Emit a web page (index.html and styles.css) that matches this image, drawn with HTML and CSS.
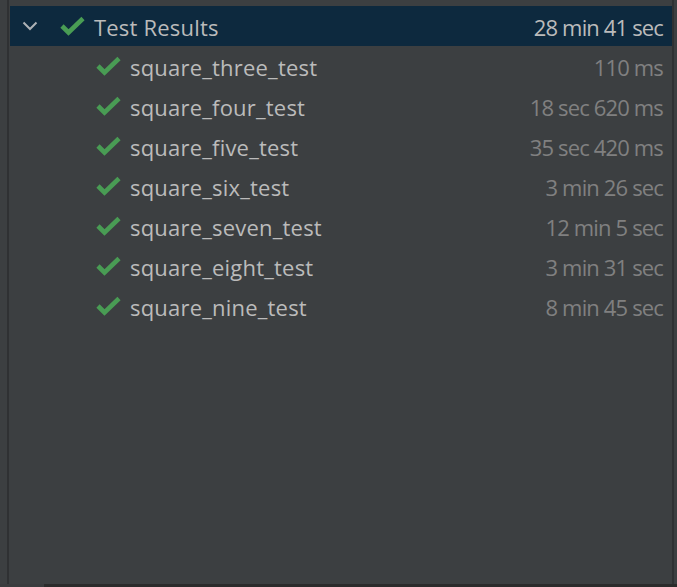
FILE: index.html
```html
<!DOCTYPE html>
<html>
<head>
<meta charset="utf-8">
<link rel="stylesheet" href="styles.css">
</head>
<body>
<div class="frame">
  <div class="gutter"></div>
  <div class="panel">
    <div class="row header">
      <svg class="chev" width="16" height="10" viewBox="0 0 16 10"><path d="M1.5 1.5 L8 8 L14.5 1.5" fill="none" stroke="#aeb2b6" stroke-width="2"/></svg>
      <svg class="check" width="25" height="20" viewBox="0 0 25 20"><path d="M2 10 L8.5 16.5 L23 2.5" fill="none" stroke="#499c54" stroke-width="4.6"/></svg>
      <span class="name">Test Results</span>
      <span class="time">28 min 41 sec</span>
    </div>
    <div class="row child"><svg class="check" width="25" height="20" viewBox="0 0 25 20"><path d="M2 10 L8.5 16.5 L23 2.5" fill="none" stroke="#499c54" stroke-width="4.6"/></svg><span class="name">square_three_test</span><span class="time">110 ms</span></div>
    <div class="row child"><svg class="check" width="25" height="20" viewBox="0 0 25 20"><path d="M2 10 L8.5 16.5 L23 2.5" fill="none" stroke="#499c54" stroke-width="4.6"/></svg><span class="name">square_four_test</span><span class="time">18 sec 620 ms</span></div>
    <div class="row child"><svg class="check" width="25" height="20" viewBox="0 0 25 20"><path d="M2 10 L8.5 16.5 L23 2.5" fill="none" stroke="#499c54" stroke-width="4.6"/></svg><span class="name">square_five_test</span><span class="time">35 sec 420 ms</span></div>
    <div class="row child"><svg class="check" width="25" height="20" viewBox="0 0 25 20"><path d="M2 10 L8.5 16.5 L23 2.5" fill="none" stroke="#499c54" stroke-width="4.6"/></svg><span class="name">square_six_test</span><span class="time">3 min 26 sec</span></div>
    <div class="row child"><svg class="check" width="25" height="20" viewBox="0 0 25 20"><path d="M2 10 L8.5 16.5 L23 2.5" fill="none" stroke="#499c54" stroke-width="4.6"/></svg><span class="name">square_seven_test</span><span class="time">12 min 5 sec</span></div>
    <div class="row child"><svg class="check" width="25" height="20" viewBox="0 0 25 20"><path d="M2 10 L8.5 16.5 L23 2.5" fill="none" stroke="#499c54" stroke-width="4.6"/></svg><span class="name">square_eight_test</span><span class="time">3 min 31 sec</span></div>
    <div class="row child"><svg class="check" width="25" height="20" viewBox="0 0 25 20"><path d="M2 10 L8.5 16.5 L23 2.5" fill="none" stroke="#499c54" stroke-width="4.6"/></svg><span class="name">square_nine_test</span><span class="time">8 min 45 sec</span></div>
  </div>
  <div class="rightedge"></div>
</div>
<div class="bottom"><div class="bottom-seg"></div></div>
</body>
</html>
```
FILE: styles.css
```css
html, body {
  margin: 0;
  padding: 0;
  background: #3c3f41;
  width: 677px;
  height: 587px;
  overflow: hidden;
  font-family: "Open Sans", "Noto Sans", sans-serif;
}
.frame {
  display: flex;
  height: 584px;
}
.gutter {
  width: 7px;
  border-right: 2px solid #2f3133;
  flex: none;
}
.panel {
  flex: 1;
  padding-top: 6px;
  padding-left: 1px;
  background: #3c3f41;
}
.rightedge {
  width: 3px;
  border-left: 2px solid #2f3133;
  flex: none;
}
.bottom {
  height: 3px;
  background: #2b2b2b;
}
.bottom-seg {
  width: 44px;
  height: 3px;
  background: #3a3c3e;
}
.row {
  height: 40px;
  box-sizing: border-box;
  padding-top: 2px;
  display: flex;
  align-items: center;
  font-size: 22px;
  padding-right: 9px;
}
.header {
  background: #0d293e;
  color: #bbbbbb;
}
.row .check {
  margin-top: -3px;
}
.chev {
  margin-left: 12px;
  margin-right: 22px;
  margin-top: -2px;
}
.header .check {
  margin-right: 9px;
}
.child .check {
  margin-left: 86px;
  margin-right: 9px;
}
.name {
  flex: 1;
  color: #bbbbbb;
  letter-spacing: 0.2px;
}
.time {
  color: #808080;
  letter-spacing: -0.85px;
}
.header .time {
  color: #bbbbbb;
}
```
